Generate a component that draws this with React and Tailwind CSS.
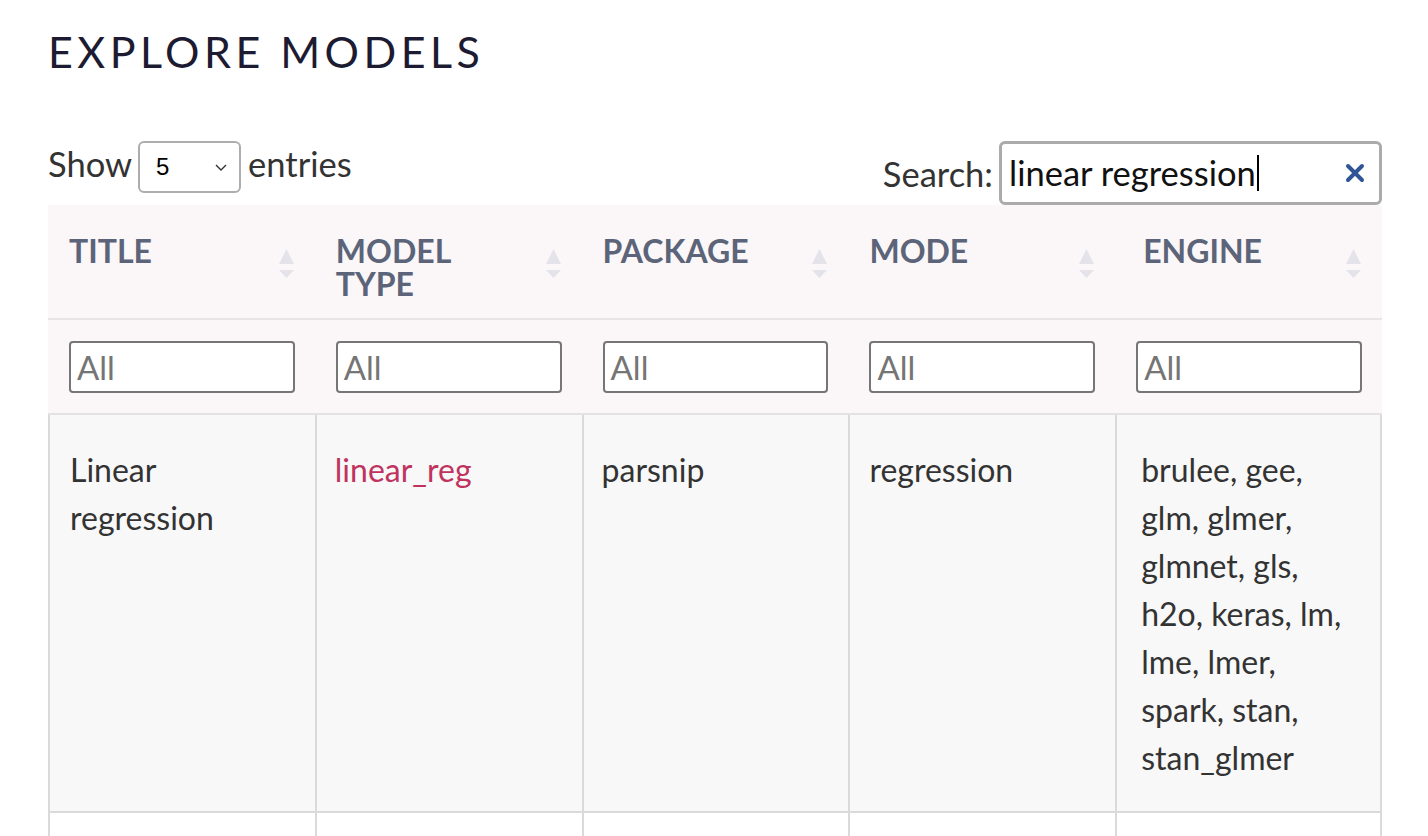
import React from 'react';

const columns = [
    { label: ['TITLE'], pad: 'pl-[21px]' },
    { label: ['MODEL', 'TYPE'], pad: 'pl-[21px]' },
    { label: ['PACKAGE'], pad: 'pl-[21px]' },
    { label: ['MODE'], pad: 'pl-[21px]' },
    { label: ['ENGINE'], pad: 'pl-[28px]' },
];

const engines = [
    'brulee, gee,',
    'glm, glmer,',
    'glmnet, gls,',
    'h2o, keras, lm,',
    'lme, lmer,',
    'spark, stan,',
    'stan_glmer',
];

const SortIcon = () => (
    <svg width="15" height="30" viewBox="0 0 15 30" className="mt-[15px] shrink-0">
        <path d="M0 15 L7.5 0 L15 15 Z" fill="#e5e3ea" />
        <path d="M0 21 L15 21 L7.5 29 Z" fill="#e5e3ea" />
    </svg>
);

const App = () => (
    <div className="min-h-[836px] bg-white pt-[26px] font-['Lato',sans-serif] text-[#333]">
        <h1 className="ml-[48px] text-[43px] leading-[52px] tracking-[0.104em] text-[#1c1b31]">EXPLORE MODELS</h1>

        <div className="mt-[63px] ml-[48px] w-[1334px] flex justify-between items-start h-[64px]">
            <div className="flex items-center h-[52px] text-[34.5px] leading-[48px]">
                <span className="mb-[6px]">Show</span>
                <div className="ml-[6px] mr-[7px] w-[103px] h-[52px] border-2 border-[#adadad] rounded-[6px] flex items-center justify-between pl-[16px] pr-[12px]">
                    <span className="font-['Liberation_Sans',sans-serif] text-[24px] leading-none text-black">5</span>
                    <svg width="12" height="7" viewBox="0 0 12 7">
                        <path d="M1 1 L6 6 L11 1" stroke="#333" strokeWidth="1.4" fill="none" />
                    </svg>
                </div>
                <span className="mb-[6px]">entries</span>
            </div>
            <div className="flex items-center h-[64px] text-[34.5px] leading-[48px]">
                <span className="mr-[6px] mt-[2px]">Search:</span>
                <div className="w-[383px] h-[64px] border-[3px] border-[#ababab] rounded-[6px] flex items-center justify-between pl-[7px] pr-[14px]">
                    <div className="flex items-center text-[#111]">
                        <span>linear regression</span>
                        <span className="w-[2px] h-[36px] bg-black ml-[1px]" />
                    </div>
                    <svg width="20" height="20" viewBox="0 0 20 20">
                        <path d="M3 3 L17 17 M17 3 L3 17" stroke="#2f5597" strokeWidth="4" strokeLinecap="round" />
                    </svg>
                </div>
            </div>
        </div>

        <div className="ml-[48px] w-[1334px]">
            <div className="grid grid-cols-5 h-[115px] bg-[#fbf7f8] border-b-2 border-[#e9e5e6]">
                {columns.map((c, i) => (
                    <div key={i} className={`flex justify-between items-start pt-[29px] pr-[21px] ${c.pad}`}>
                        <div className="text-[32px] leading-[33px] font-bold text-[#5b6479]">
                            {c.label.map((l) => (
                                <div key={l}>{l}</div>
                            ))}
                        </div>
                        <SortIcon />
                    </div>
                ))}
            </div>

            <div className="grid grid-cols-5 h-[95px] bg-[#fbf7f8] border-b-2 border-[#e4e2e3]">
                {columns.map((c, i) => (
                    <div key={i} className="pt-[21px] pl-[21px] pr-[20px]">
                        <div className="h-[52px] border-2 border-[#767676] rounded-[4px] bg-white flex items-center pl-[6px] text-[33px] leading-none text-[#757575]">
                            All
                        </div>
                    </div>
                ))}
            </div>

            <div className="grid grid-cols-5 h-[398px] bg-[#f8f8f8] border-b-2 border-[#dadada] text-[32px] leading-[48px]">
                <div className="border-l-2 border-[#dadada] pt-[31px] pl-[20px] pr-[20px]">Linear<br />regression</div>
                <div className="border-l-2 border-[#dadada] pt-[31px] pl-[18px] text-[#c0335e]">linear_reg</div>
                <div className="border-l-2 border-[#dadada] pt-[31px] pl-[18px]">parsnip</div>
                <div className="border-l-2 border-[#dadada] pt-[31px] pl-[19px]">regression</div>
                <div className="border-x-2 border-[#dadada] pt-[31px] pl-[24px]">
                    {engines.map((e) => (
                        <div key={e}>{e}</div>
                    ))}
                </div>
            </div>

            <div className="grid grid-cols-5 h-[40px] bg-white">
                <div className="border-l-2 border-[#dadada]" />
                <div className="border-l-2 border-[#dadada]" />
                <div className="border-l-2 border-[#dadada]" />
                <div className="border-l-2 border-[#dadada]" />
                <div className="border-x-2 border-[#dadada]" />
            </div>
        </div>
    </div>
);

export default App;
